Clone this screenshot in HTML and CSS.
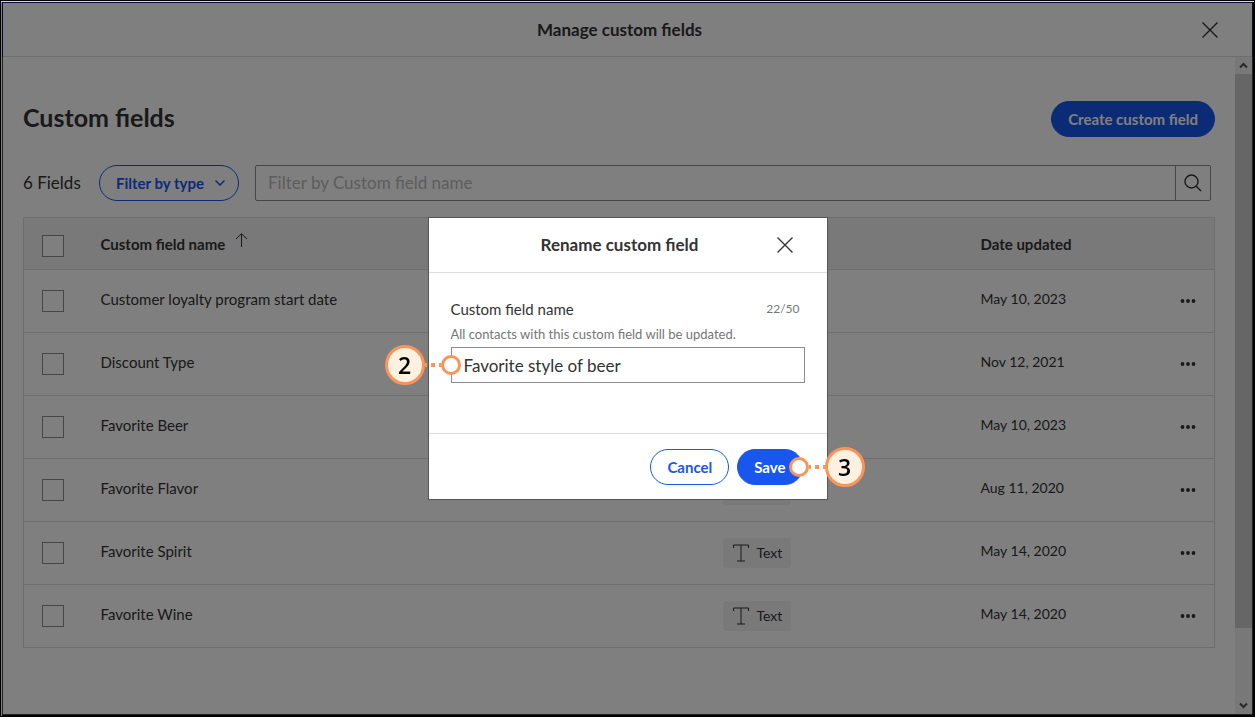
FILE: index.html
```html
<!DOCTYPE html>
<html lang="en">
<head>
<meta charset="utf-8">
<title>Manage custom fields</title>
<link rel="stylesheet" href="styles.css">
</head>
<body>
<div class="window">
  <header class="topbar">
    <h1 class="topbar-title">Manage custom fields</h1>
    <button class="icon-button topbar-close" type="button" aria-label="Close">
      <svg width="16" height="16" viewBox="0 0 16 16"><path d="M.5.5l15 15M15.500.5l-15 15"/></svg>
    </button>
  </header>
  <div class="viewport">
    <main class="content">
      <div class="heading-row">
        <h2 class="heading">Custom fields</h2>
        <button class="pill pill-primary" type="button">Create custom field</button>
      </div>
      <div class="filters">
        <span class="count">6 Fields</span>
        <button class="pill pill-outline filter-type" type="button">Filter by type
          <svg width="10" height="6" viewBox="0 0 10 6"><path d="M.5.5L5 5 9.500.5"/></svg>
        </button>
        <form class="search">
          <input class="search-input" type="text" aria-label="Filter by Custom field name" placeholder="Filter by Custom field name">
          <button class="search-button" type="button" aria-label="Search">
            <svg width="18" height="18" viewBox="0 0 18 18"><circle cx="7.500" cy="7.500" r="6.500"/><path d="M12 12l5 5"/></svg>
          </button>
        </form>
      </div>
      <table class="fields">
        <colgroup><col class="col-check"><col class="col-name"><col class="col-type"><col class="col-date"><col class="col-more"></colgroup>
        <thead>
          <tr>
            <th><input class="check" type="checkbox" aria-label="Select all"></th>
            <th><span class="label">Custom field name <svg class="sort" width="13" height="14" viewBox="0 0 13 14"><path d="M6.500 14V1M1 6l5.500-5.300L12 6"/></svg></span></th>
            <th><span class="label">Type</span></th>
            <th><span class="label">Date updated</span></th>
            <th></th>
          </tr>
        </thead>
        <tbody>
          <tr>
            <td><input class="check" type="checkbox" aria-label="Select Customer loyalty program start date"></td>
            <td><span class="label">Customer loyalty program start date</span></td>
            <td></td>
            <td><span class="label date">May 10, 2023</span></td>
            <td><button class="icon-button more" type="button" aria-label="More"><svg width="16" height="4" viewBox="0 0 16 4"><circle cx="2.500" cy="2" r="1.900"/><circle cx="8" cy="2" r="1.900"/><circle cx="13.500" cy="2" r="1.900"/></svg></button></td>
          </tr>
          <tr>
            <td><input class="check" type="checkbox" aria-label="Select Discount Type"></td>
            <td><span class="label">Discount Type</span></td>
            <td></td>
            <td><span class="label date">Nov 12, 2021</span></td>
            <td><button class="icon-button more" type="button" aria-label="More"><svg width="16" height="4" viewBox="0 0 16 4"><circle cx="2.500" cy="2" r="1.900"/><circle cx="8" cy="2" r="1.900"/><circle cx="13.500" cy="2" r="1.900"/></svg></button></td>
          </tr>
          <tr>
            <td><input class="check" type="checkbox" aria-label="Select Favorite Beer"></td>
            <td><span class="label">Favorite Beer</span></td>
            <td></td>
            <td><span class="label date">May 10, 2023</span></td>
            <td><button class="icon-button more" type="button" aria-label="More"><svg width="16" height="4" viewBox="0 0 16 4"><circle cx="2.500" cy="2" r="1.900"/><circle cx="8" cy="2" r="1.900"/><circle cx="13.500" cy="2" r="1.900"/></svg></button></td>
          </tr>
          <tr>
            <td><input class="check" type="checkbox" aria-label="Select Favorite Flavor"></td>
            <td><span class="label">Favorite Flavor</span></td>
            <td><span class="tag"><svg width="16" height="18" viewBox="0 0 16 18"><path d="M.5 4V1h15v3M8 1v16M4 17h8"/></svg>Text</span></td>
            <td><span class="label date">Aug 11, 2020</span></td>
            <td><button class="icon-button more" type="button" aria-label="More"><svg width="16" height="4" viewBox="0 0 16 4"><circle cx="2.500" cy="2" r="1.900"/><circle cx="8" cy="2" r="1.900"/><circle cx="13.500" cy="2" r="1.900"/></svg></button></td>
          </tr>
          <tr>
            <td><input class="check" type="checkbox" aria-label="Select Favorite Spirit"></td>
            <td><span class="label">Favorite Spirit</span></td>
            <td><span class="tag"><svg width="16" height="18" viewBox="0 0 16 18"><path d="M.5 4V1h15v3M8 1v16M4 17h8"/></svg>Text</span></td>
            <td><span class="label date">May 14, 2020</span></td>
            <td><button class="icon-button more" type="button" aria-label="More"><svg width="16" height="4" viewBox="0 0 16 4"><circle cx="2.500" cy="2" r="1.900"/><circle cx="8" cy="2" r="1.900"/><circle cx="13.500" cy="2" r="1.900"/></svg></button></td>
          </tr>
          <tr>
            <td><input class="check" type="checkbox" aria-label="Select Favorite Wine"></td>
            <td><span class="label">Favorite Wine</span></td>
            <td><span class="tag"><svg width="16" height="18" viewBox="0 0 16 18"><path d="M.5 4V1h15v3M8 1v16M4 17h8"/></svg>Text</span></td>
            <td><span class="label date">May 14, 2020</span></td>
            <td><button class="icon-button more" type="button" aria-label="More"><svg width="16" height="4" viewBox="0 0 16 4"><circle cx="2.500" cy="2" r="1.900"/><circle cx="8" cy="2" r="1.900"/><circle cx="13.500" cy="2" r="1.900"/></svg></button></td>
          </tr>
        </tbody>
      </table>
    </main>
    <div class="scrollbar" aria-hidden="true">
      <svg width="17" height="17" viewBox="0 0 17 17"><path d="M5 10.500L8.500 7l3.500 3.500"/></svg>
      <div class="track"><div class="thumb"></div></div>
      <svg width="17" height="17" viewBox="0 0 17 17"><path d="M5 6.500L8.500 10 12 6.500"/></svg>
    </div>
  </div>
</div>

<div class="overlay">
  <section class="dialog" role="dialog" aria-labelledby="dialog-title">
    <header class="dialog-head">
      <h2 class="dialog-title" id="dialog-title">Rename custom field</h2>
      <button class="icon-button dialog-close" type="button" aria-label="Close dialog">
        <svg width="16" height="16" viewBox="0 0 16 16"><path d="M.5.5l15 15M15.500.5l-15 15"/></svg>
      </button>
    </header>
    <div class="dialog-body">
      <div class="field-head">
        <label for="field-name">Custom field name</label>
        <span class="hint counter">22/50</span>
      </div>
      <p class="hint">All contacts with this custom field will be updated.</p>
      <div class="anchor">
        <input class="name-input" id="field-name" type="text" value="Favorite style of beer">
        <div class="marker marker-left"><span class="number">2</span><span class="dots"></span><span class="ring"></span></div>
      </div>
    </div>
    <footer class="dialog-foot">
      <button class="pill pill-outline" type="button">Cancel</button>
      <div class="anchor">
        <button class="pill pill-primary" type="button">Save</button>
        <div class="marker marker-right"><span class="ring"></span><span class="dots"></span><span class="number">3</span></div>
      </div>
    </footer>
  </section>
</div>
<div class="edge"></div>
</body>
</html>
```
FILE: styles.css
```css
* { box-sizing: border-box; }

body {
  margin: 0;
  background: #000;
  color: #333;
  font: 15px/20px Lato, "Open Sans", sans-serif;
}

h1, h2, p { margin: 0; }

button, input { font: inherit; color: inherit; }

svg { display: block; fill: none; stroke: #333; }

.window {
  display: flex;
  flex-direction: column;
  min-height: 100vh;
  border: 3px solid #444;
  border-top-color: #001a70;
  background: #fff;
}

.topbar {
  display: flex;
  align-items: center;
  height: 54px;
  padding: 0 34px;
  border-bottom: 1px solid #ddd;
  box-shadow: -1px 0 #001a70, 1px 0 #001a70;
}

.topbar-title, .dialog-title {
  flex: 1;
  font-size: 17px;
  font-weight: 700;
  text-align: center;
}

.icon-button {
  display: flex;
  padding: 0;
  border: 0;
  background: none;
}

.topbar-close svg, .dialog-close svg { stroke-width: 1.400; }

.viewport { display: flex; flex: 1; }

.content { flex: 1; padding: 44px 20px 0; }

.heading-row {
  display: flex;
  align-items: flex-start;
  justify-content: space-between;
}

.heading { font-size: 25px; line-height: 32px; }

.pill {
  display: flex;
  align-items: center;
  height: 36px;
  padding: 0 16px;
  border: 1px solid #1856ed;
  border-radius: 18px;
  font-size: 15px;
  font-weight: 700;
  white-space: nowrap;
}

.pill-primary { background: #1856ed; color: #fff; }

.pill-outline { background: #fff; color: #1856ed; }

.pill-outline svg { stroke: #1856ed; stroke-width: 1.500; }

.filters {
  display: flex;
  align-items: center;
  margin: 28px 4px 16px 0;
}

.count { width: 76px; font-size: 17px; }

.filter-type { width: 140px; justify-content: space-between; padding-right: 13px; }

.search {
  display: flex;
  flex: 1;
  height: 36px;
  margin-left: 16px;
  border: 1px solid #8c8c8c;
  border-radius: 2px;
}

.search-input {
  flex: 1;
  min-width: 0;
  padding: 0 12px;
  border: 0;
  background: none;
  font-size: 17px;
}

.search-input::placeholder { color: #bbb; }

.search-button {
  display: grid;
  place-items: center;
  width: 35px;
  padding: 0;
  border: 0;
  border-left: 1px solid #8c8c8c;
  background: none;
}

.search-button svg { stroke-width: 1.400; }

.fields {
  width: 100%;
  table-layout: fixed;
  border-collapse: collapse;
  border: 1px solid #ddd;
}

.col-check { width: 77px; }
.col-name { width: 622px; }
.col-type { width: 258px; }
.col-more { width: 44px; }

.fields th, .fields td {
  height: 63px;
  padding: 0;
  border-bottom: 1px solid #ddd;
  text-align: left;
}

.fields th { height: 52px; background: #f3f3f3; }

.label { display: flex; align-items: center; padding-bottom: 4px; }

.date { font-size: 14px; }

.fields th .label { padding-bottom: 0; }

.sort { margin: 0 0 8px 10px; }

.check {
  display: block;
  appearance: none;
  width: 22px;
  height: 22px;
  margin: 0 0 0 18px;
  border: 1px solid #8c8c8c;
  background: #fff;
}

.fields th .check { margin-top: 4px; }

.tag {
  display: flex;
  align-items: center;
  gap: 8px;
  width: 68px;
  height: 30px;
  padding-left: 10px;
  border-radius: 3px;
  background: #f3f3f3;
  font-size: 14px;
}

.more { margin-left: 9px; }

.more svg { fill: #333; stroke: none; }

.scrollbar {
  display: flex;
  flex-direction: column;
  width: 17px;
  background: #f1f1f1;
}

.scrollbar svg { stroke: #505050; stroke-width: 2; }

.track { flex: 1; }

.thumb { height: 89%; background: #cdcdcd; }

.overlay {
  position: fixed;
  inset: 0;
  display: grid;
  place-items: center;
  background: rgba(0, 0, 0, .5);
}

.dialog {
  width: 400px;
  border: 1px solid #555;
  background: #fff;
}

.dialog-head {
  display: flex;
  align-items: center;
  height: 55px;
  padding: 0 34px;
  border-bottom: 1px solid #ddd;
}

.dialog-body { padding: 26px 22px 50px; }

.field-head { display: flex; justify-content: space-between; padding-right: 5px; }

.hint { color: #767676; font-size: 13px; }

.counter { font-size: 12px; }

.dialog-body p { padding: 5px 0 3px; }

.anchor { position: relative; }

.name-input {
  display: block;
  width: 100%;
  height: 36px;
  padding: 0 12px;
  border: 1px solid #8c8c8c;
  background: #fff;
  font-size: 17px;
}

.dialog-foot {
  display: flex;
  justify-content: flex-end;
  gap: 8px;
  padding: 15px 24px 14px;
  border-top: 1px solid #ddd;
}

.marker {
  position: absolute;
  top: -2px;
  display: flex;
  align-items: center;
}

.marker-left { right: calc(100% - 10px); }

.marker-right { left: calc(100% - 14px); }

.number {
  display: grid;
  place-items: center;
  width: 40px;
  height: 40px;
  border: 3px solid #fc935a;
  border-radius: 50%;
  background: #fff1e0;
  color: #000;
  font: 600 23px/32px "Open Sans", sans-serif;
}

.dots {
  width: 16px;
  height: 4px;
  background: linear-gradient(90deg, #fc935a 4px, transparent 4px) -2px 0 / 8px 4px;
}

.ring {
  width: 20px;
  height: 20px;
  border: 3px solid #fc935a;
  border-radius: 50%;
  background: #fff;
}

.edge {
  position: fixed;
  inset: 0;
  border: 1px solid #000;
  box-shadow: inset 1px 1px #808080, inset -1px -1px #000;
  pointer-events: none;
}

.edge::before {
  content: "";
  display: block;
  height: 1px;
  background: #d8d8d8;
}
```
